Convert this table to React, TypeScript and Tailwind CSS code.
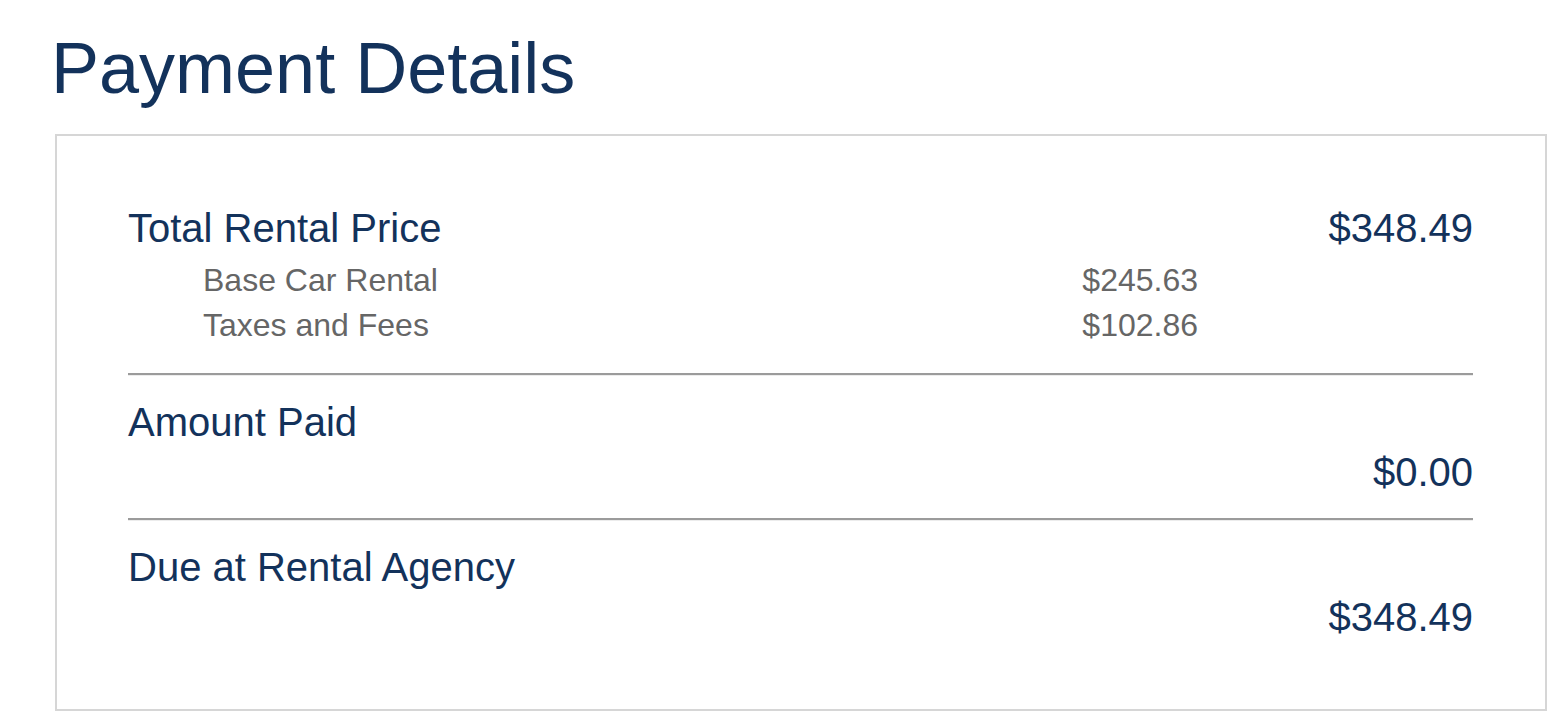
const navy = 'text-[#13325b]';

const breakdown = [
  { label: 'Base Car Rental', amount: '$245.63' },
  { label: 'Taxes and Fees', amount: '$102.86' },
];

function Divider({ className = '' }: { className?: string }) {
  return <div className={`h-0 border-t-2 border-b border-t-[#9b9b9b] border-b-[#ececec] ${className}`} />;
}

function Section({ label, amount }: { label: string; amount: string }) {
  return (
    <div className="mt-[21px] mb-[21px] text-[40px] leading-[50px]">
      <div className={navy}>{label}</div>
      <div className={`text-right ${navy}`}>{amount}</div>
    </div>
  );
}

export default function App() {
  return (
    <div className="min-h-screen bg-white pt-[32px] font-['Liberation_Sans',Arial,sans-serif]">
      <h1 className={`pl-[51px] text-[72px] leading-none font-normal ${navy}`}>Payment Details</h1>

      <div className="mt-[30px] ml-[55px] mr-[11px] border-2 border-[#d6d6d6] pt-[67px] pb-[67px] pl-[71px] pr-[72px]">
        {/* Total */}
        <div className="flex justify-between text-[40px] leading-[50px]">
          <span className={navy}>Total Rental Price</span>
          <span className={navy}>$348.49</span>
        </div>
        <div className="mt-[5px] pl-[75px] pr-[275px] text-[32px] leading-[45px] text-[#666666]">
          {breakdown.map((row) => (
            <div key={row.label} className="flex justify-between">
              <span>{row.label}</span>
              <span>{row.amount}</span>
            </div>
          ))}
        </div>

        <Divider className="mt-[25px]" />
        <Section label="Amount Paid" amount="$0.00" />
        <Divider />
        <div className="mt-[21px] text-[40px] leading-[50px]">
          <div className={navy}>Due at Rental Agency</div>
          <div className={`text-right ${navy}`}>$348.49</div>
        </div>
      </div>
    </div>
  );
}
